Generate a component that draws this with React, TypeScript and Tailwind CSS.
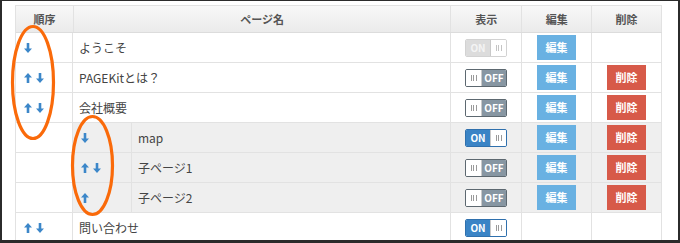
import React from 'react';

type Row = {
  name: string;
  up: boolean;
  down: boolean;
  child?: boolean;
  visible: 'on' | 'off' | 'on-disabled';
  edit: boolean;
  remove: boolean;
};

const rows: Row[] = [
  { name: 'ようこそ', up: false, down: true, visible: 'on-disabled', edit: true, remove: false },
  { name: 'PAGEKitとは？', up: true, down: true, visible: 'off', edit: true, remove: true },
  { name: '会社概要', up: true, down: true, visible: 'off', edit: true, remove: true },
  { name: 'map', up: false, down: true, child: true, visible: 'on', edit: true, remove: true },
  { name: '子ページ1', up: true, down: true, child: true, visible: 'off', edit: true, remove: true },
  { name: '子ページ2', up: true, down: false, child: true, visible: 'off', edit: true, remove: true },
  { name: '問い合わせ', up: true, down: true, visible: 'on', edit: false, remove: false },
];

const Arrow = ({ dir }: { dir: 'up' | 'down' }) => (
  <svg width="8" height="10" viewBox="0 0 8 10" className="text-[#3c87c9]">
    {dir === 'up' ? (
      <polygon points="4,0 8,4.4 5.3,4.4 5.3,10 2.7,10 2.7,4.4 0,4.4" fill="currentColor" />
    ) : (
      <polygon points="4,10 8,5.6 5.3,5.6 5.3,0 2.7,0 2.7,5.6 0,5.6" fill="currentColor" />
    )}
  </svg>
);

const Arrows = ({ up, down }: { up: boolean; down: boolean }) => (
  <div className="flex items-center gap-[4px] pl-[8px]">
    {up && <Arrow dir="up" />}
    {down && <Arrow dir="down" />}
  </div>
);

// スイッチのつまみ（|||）
const Grip = ({ light }: { light?: boolean }) => (
  <div className="flex gap-[1.5px]">
    <span className={`w-px h-[6px] ${light ? 'bg-[#c4c4c4]' : 'bg-[#9a9a9a]'}`} />
    <span className={`w-px h-[6px] ${light ? 'bg-[#c4c4c4]' : 'bg-[#9a9a9a]'}`} />
    <span className={`w-px h-[6px] ${light ? 'bg-[#c4c4c4]' : 'bg-[#9a9a9a]'}`} />
  </div>
);

const Toggle = ({ state }: { state: Row['visible'] }) => {
  if (state === 'off') {
    return (
      <div className="flex w-[42px] h-[18px] border border-[#5d6870] rounded-[2px] overflow-hidden">
        <div className="w-[16px] bg-white flex items-center justify-center border-r border-[#c9c9c9]">
          <Grip />
        </div>
        <div className="flex-1 bg-[#8796a2] text-white text-[10px] font-bold flex items-center justify-center">
          OFF
        </div>
      </div>
    );
  }
  const disabled = state === 'on-disabled';
  return (
    <div
      className={`flex w-[42px] h-[18px] border rounded-[2px] overflow-hidden ${
        disabled ? 'border-[#d2d2d2]' : 'border-[#2f70ad]'
      }`}
    >
      <div
        className={`flex-1 text-[10px] font-bold flex items-center justify-center ${
          disabled ? 'bg-[#dcdcdc] text-[#f4f4f4]' : 'bg-[#3a84c6] text-white'
        }`}
      >
        ON
      </div>
      <div className="w-[16px] bg-white flex items-center justify-center border-l border-[#c9c9c9]">
        <Grip light={disabled} />
      </div>
    </div>
  );
};

const Btn = ({ kind }: { kind: 'edit' | 'remove' }) => (
  <div
    className={`w-[39px] h-[25px] flex items-center justify-center text-white text-[11px] font-bold ${
      kind === 'edit' ? 'bg-[#69b1e2]' : 'bg-[#d75a49]'
    }`}
  >
    {kind === 'edit' ? '編集' : '削除'}
  </div>
);

const App = () => {
  return (
    <div className="relative w-[680px] h-[243px] overflow-hidden bg-white border-t border-l-2 border-r-2 border-b-[3px] border-[#2b2b2b] pl-[13px] pt-[4px] font-['Noto_Sans_CJK_JP','Noto_Sans',sans-serif] text-[#444]">
      <div className="w-[647px] border-l border-t border-[#e2e2e2]">
        {/* ヘッダー */}
        <div className="flex h-[27px] border-b border-[#dcdcdc] bg-gradient-to-b from-[#f8f8f8] to-[#ebebeb] text-[11px] font-bold text-[#555]">
          <div className="w-[58px] flex items-center justify-center border-r border-[#e2e2e2]">順序</div>
          <div className="w-[378px] flex items-center justify-center border-r border-[#e2e2e2]">ページ名</div>
          <div className="w-[71px] flex items-center justify-center border-r border-[#e2e2e2]">表示</div>
          <div className="w-[70px] flex items-center justify-center border-r border-[#e2e2e2]">編集</div>
          <div className="w-[70px] flex items-center justify-center border-r border-[#e2e2e2]">削除</div>
        </div>

        {rows.map((row) => (
          <div key={row.name} className="flex h-[30px] border-b border-[#e2e2e2] text-[12px]">
            <div className="w-[58px] flex items-center border-r border-[#e2e2e2] bg-white">
              {!row.child && <Arrows up={row.up} down={row.down} />}
            </div>
            <div className={`flex-1 flex ${row.child ? 'bg-[#efefef]' : 'bg-white'}`}>
              <div className="w-[378px] flex border-r border-[#e2e2e2]">
                {row.child && (
                  <div className="w-[59px] flex items-center border-r border-[#e2e2e2]">
                    <Arrows up={row.up} down={row.down} />
                  </div>
                )}
                <div className="flex-1 flex items-center pl-[6px]">{row.name}</div>
              </div>
              <div className="w-[71px] flex items-center justify-center border-r border-[#e2e2e2]">
                <Toggle state={row.visible} />
              </div>
              <div className="w-[70px] flex items-center justify-center border-r border-[#e2e2e2]">
                {row.edit && <Btn kind="edit" />}
              </div>
              <div className="w-[70px] flex items-center justify-center border-r border-[#e2e2e2]">
                {row.remove && <Btn kind="remove" />}
              </div>
            </div>
          </div>
        ))}
      </div>

      {/* 注釈の楕円 */}
      <svg className="absolute left-0 top-0 pointer-events-none" width="680" height="243" viewBox="0 0 680 243">
        <ellipse cx="31" cy="81.5" rx="20.5" ry="56" fill="none" stroke="#fa6a0a" strokeWidth="3.2" />
        <ellipse cx="90.5" cy="164.5" rx="20" ry="49" fill="none" stroke="#fa6a0a" strokeWidth="3.2" />
      </svg>
    </div>
  );
};

export default App;
